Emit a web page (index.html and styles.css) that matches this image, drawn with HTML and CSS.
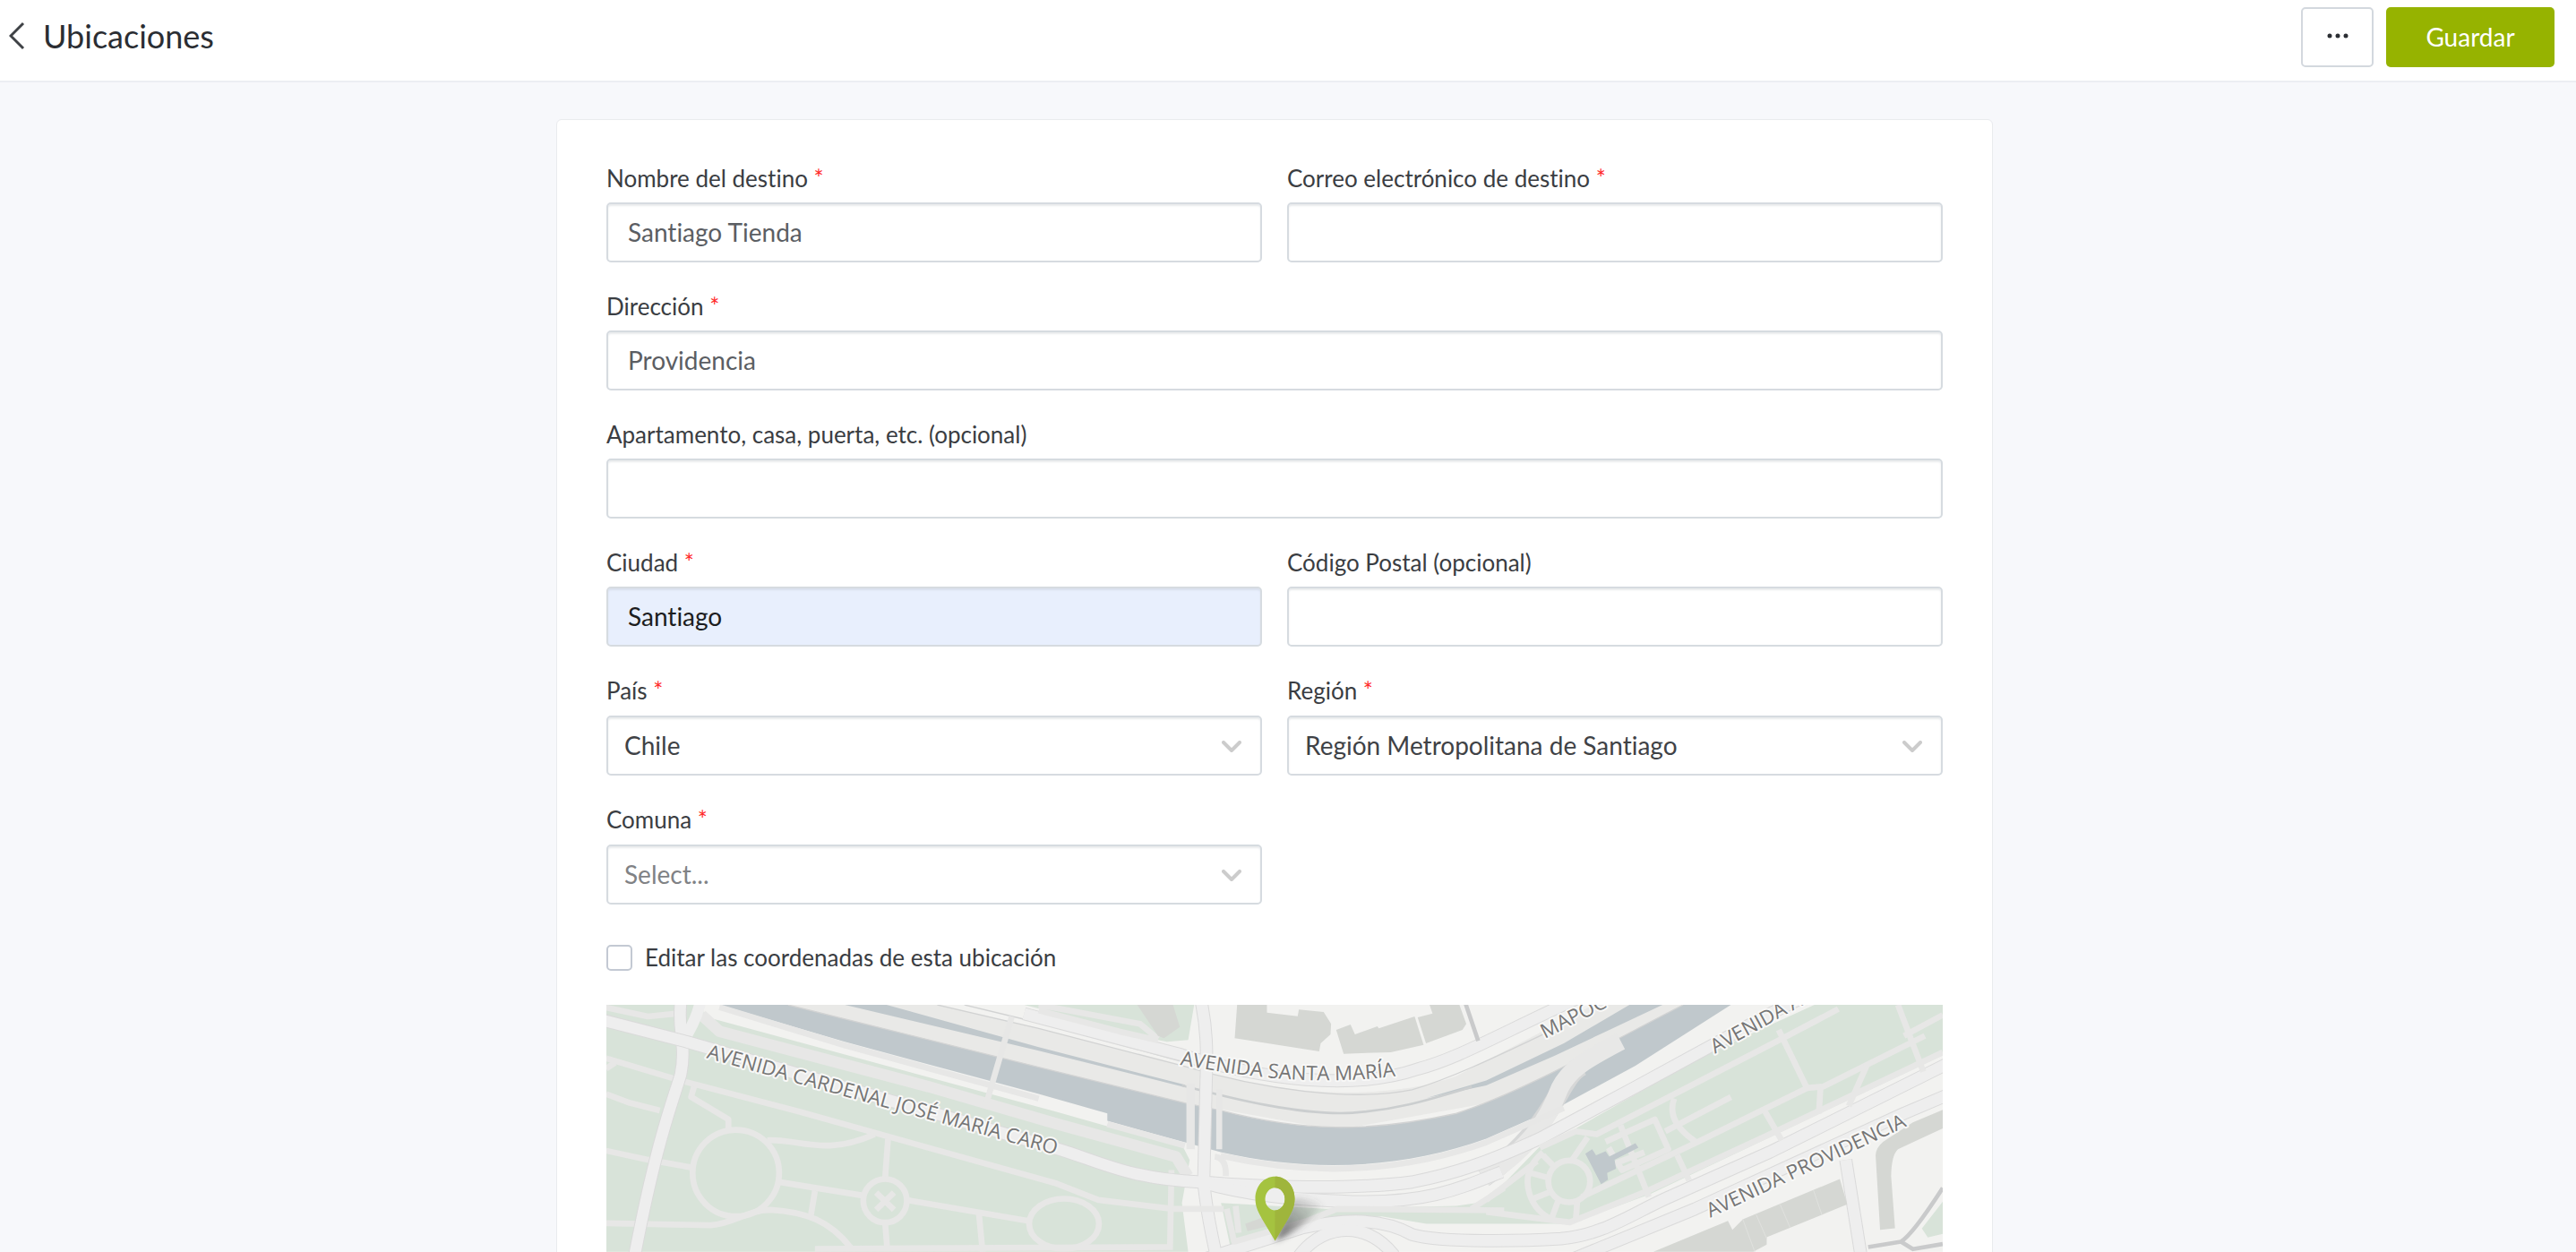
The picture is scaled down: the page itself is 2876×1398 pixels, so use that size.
FILE: index.html
```html
<!DOCTYPE html>
<html lang="es">
<head>
<meta charset="utf-8">
<meta name="viewport" content="width=device-width, initial-scale=1">
<title>Ubicaciones</title>
<link rel="stylesheet" href="styles.css">
</head>
<body>
<header class="topbar">
  <a class="back" href="#">
    <svg class="back-icon" viewBox="0 0 18 32" aria-hidden="true"><path d="M16 2 2 16l14 14"/></svg>
    <h1 class="title">Ubicaciones</h1>
  </a>
  <div class="actions">
    <button class="btn btn-more" type="button" aria-label="Más opciones">
      <svg class="dots" viewBox="0 0 24 6" aria-hidden="true"><circle cx="3" cy="3" r="2.5"/><circle cx="12" cy="3" r="2.5"/><circle cx="21" cy="3" r="2.5"/></svg>
    </button>
    <button class="btn btn-primary" type="submit" form="location">Guardar</button>
  </div>
</header>
<main class="content">
  <form class="card" id="location">
    <div class="fields">
      <div class="field">
        <label class="label" for="name">Nombre del destino <span class="req">*</span></label>
        <input class="control" id="name" type="text" value="Santiago Tienda">
      </div>
      <div class="field">
        <label class="label" for="email">Correo electrónico de destino <span class="req">*</span></label>
        <input class="control" id="email" type="email">
      </div>
      <div class="field wide">
        <label class="label" for="address">Dirección <span class="req">*</span></label>
        <input class="control" id="address" type="text" value="Providencia">
      </div>
      <div class="field wide">
        <label class="label" for="unit">Apartamento, casa, puerta, etc. (opcional)</label>
        <input class="control" id="unit" type="text">
      </div>
      <div class="field">
        <label class="label" for="city">Ciudad <span class="req">*</span></label>
        <input class="control filled" id="city" type="text" value="Santiago">
      </div>
      <div class="field">
        <label class="label" for="zip">Código Postal (opcional)</label>
        <input class="control" id="zip" type="text">
      </div>
      <div class="field field-select">
        <label class="label" for="country">País <span class="req">*</span></label>
        <div class="select">
          <select class="control" id="country"><option>Chile</option></select>
          <svg class="chevron" viewBox="0 0 22 14" aria-hidden="true"><path d="M2 2l9 9 9-9"/></svg>
        </div>
      </div>
      <div class="field field-select">
        <label class="label" for="region">Región <span class="req">*</span></label>
        <div class="select">
          <select class="control" id="region"><option>Región Metropolitana de Santiago</option></select>
          <svg class="chevron" viewBox="0 0 22 14" aria-hidden="true"><path d="M2 2l9 9 9-9"/></svg>
        </div>
      </div>
      <div class="field field-select">
        <label class="label" for="comuna">Comuna <span class="req">*</span></label>
        <div class="select">
          <select class="control empty" id="comuna"><option>Select...</option></select>
          <svg class="chevron" viewBox="0 0 22 14" aria-hidden="true"><path d="M2 2l9 9 9-9"/></svg>
        </div>
      </div>
    </div>
    <div class="check">
      <input class="checkbox" id="coords" type="checkbox">
      <label class="check-label" for="coords">Editar las coordenadas de esta ubicación</label>
    </div>
    <svg class="map" viewBox="0 0 4479 828" role="img" aria-label="Mapa de la ubicación">
      <defs>
        <filter id="soft" x="-50%" y="-50%" width="200%" height="200%"><feGaussianBlur stdDeviation="10"/></filter>
        <linearGradient id="shade" x1="0" y1="1" x2="1" y2="0"><stop offset="0" stop-color="#333" stop-opacity=".75"/><stop offset="1" stop-color="#555" stop-opacity="0"/></linearGradient>
        <path id="caro" d="M334 178 L1620 534"/>
        <path id="maria" d="M1922 201 C2100 232 2380 285 2720 228"/>
        <!-- main roads, drawn once as casing and once as fill -->
        <g id="roads">
          <path d="M-10 52 L270 124 L1509 482 C1640 520 1750 585 1990 594"/>
          <path d="M1994 594 C2200 612 2500 620 2700 594 C2850 565 2960 525 3129 448 L3449 276 L3900 30 L4000 -20"/>
          <path d="M1994 594 C2150 640 2300 652 2500 660 C2750 664 2850 620 3000 560"/>
          <path d="M1994 -10 C2012 80 2014 150 2010 264 L2002 594 C2010 680 2026 760 2044 840"/>
          <path d="M1400 30 L1929 168 C2200 250 2500 290 2720 215 C2850 180 2950 120 3250 -20"/>
          <path d="M1980 860 L2330 748 C2480 715 2600 715 2700 770 C2800 800 3100 790 3199 784 C3340 770 3420 710 3549 650 L3899 494 L4500 195"/>
          <path d="M3220 860 L3649 684 L4349 364 L4500 300"/>
          <path d="M2310 860 C2380 740 2540 710 2640 840"/>
          <path d="M4154 520 L4205 840"/>
        </g>
      </defs>

      <!-- ground, parks -->
      <rect class="ground" width="4479" height="828"/>
      <path class="park" d="M0 0H320L329 39 1509 359 1934 479 1955 520 1929 664 1950 828H0Z"/>
      <path class="park" d="M1400 0 1649 62 1799 108 1879 124 1950 118 1970 0Z"/>
      <path class="park" d="M2949 660 3129 474 3249 414 3689 164 4049 0H4479V169L3899 444 3499 634 3229 734H2929L2749 734 2599 709 2389 726 2090 805 2060 664 2410 684 2849 674Z"/>
      <path class="park" d="M4479 660 4409 750 4429 780 4479 768Z"/>

      <!-- river and motorway -->
      <path class="motorway" d="M609 0H1109L1449 79 1929 204 2039 234 C2250 292 2600 330 2849 239 L3309 0H3609L3469 84 3319 154 3199 214 2949 330 2449 420 1939 329 1449 211Z"/>
      <path class="water" d="M609 0 1449 209 1939 329 2059 354 C2330 425 2550 430 2849 364 C3050 300 3300 160 3609 0H3769L3449 204 3209 334 2949 449 C2650 555 2350 560 2059 494L1679 389V364L1449 299 799 124 379 0Z"/>
      <path class="water" d="M799 0H939L1449 142 1939 268V276L1449 154Z"/>
      <path class="water" d="M2749 312 2949 254 3209 129 3429 0H3540L3349 90 3179 170 2949 270Z"/>
      <path class="edge" d="M609 0 1449 209 1939 329 2059 354 C2330 425 2550 430 2849 364 C3050 300 3300 160 3609 0"/>
      <path class="edge thick" d="M1929 270 C2100 315 2330 372 2500 362 C2650 352 2750 320 2900 275"/>
      <path class="edge" d="M1109 0 1449 79 1929 204 C2200 285 2500 325 2700 285 C2820 250 2950 190 3200 70"/>
      <path class="edge" d="M1200 0 1449 60 1929 190"/>
      <path class="ramp-case" d="M3270 205 C3190 240 3190 400 2940 580"/>
      <path class="ramp" d="M3400 122 C3270 190 3225 220 3195 280 C3160 370 3110 470 2940 580"/>
      <path class="walk" d="M379 8 799 136 1449 314M1679 400 1939 472M2059 506 C2350 572 2650 567 2949 461L3209 346"/>

      <!-- western park -->
      <g transform="translate(-51 -306)">
        <path class="walk wide" d="M370 340 430 395 1130 580 1560 705 1960 815 2000 880"/>
        <path class="walk" d="M50 315 190 345 290 335M50 485 300 560 700 665 1560 905 1700 960 1950 990"/>
        <path class="walk" d="M50 520 80 500M50 605 130 635 230 660M50 795 190 825 340 852M345 580 335 615 460 690V720"/>
        <path class="walk" d="M590 760 C700 755 780 815 950 740M995 755 985 890M630 900 910 945M1055 960 1465 1030M750 930 735 1020M985 1035 992 1120M1300 1010 1312 1134"/>
        <path class="walk" d="M50 1038 400 1045 C480 1040 520 995 600 993 C720 1000 800 1030 870 1120"/>
        <circle class="walk" cx="485" cy="870" r="145"/><circle class="walk" cx="985" cy="963" r="73"/>
        <path class="walk" d="M955 935 1015 993M1015 935 955 993"/>
        <ellipse class="walk" cx="1585" cy="1040" rx="117" ry="84"/>
        <path class="walk" d="M750 1124 1950 1118M1945 860 1940 1120"/>
        <path class="walk" d="M1410 345 1325 635"/>
        <path class="road-case" d="M300 300 C290 400 320 440 300 540 C270 640 220 760 145 1150"/>
        <path class="road" d="M300 300 C290 400 320 440 300 540 C270 640 220 760 145 1150M365 300 C350 370 320 400 305 440"/>
      </g>

      <use href="#roads" class="road-case"/>
      <use href="#roads" class="road"/>

      <!-- bridges, buildings and the paths by the pin -->
      <g transform="translate(1449 -66)">
        <path class="walk bridge" d="M509 330V550"/>
        <path class="walk" d="M605 350V550M590 575Q630 580 627 640M620 750H450M630 750 655 860 900 790 1000 750 1560 755M660 740 670 830M1450 750 1560 680"/>
        <path class="walk" d="M0 85 270 155 400 185M0 66 340 130 400 180"/>
        <path class="building" d="M665 66H765V92L868 104 872 82 955 90 980 130 978 165 945 195 940 222 657 178Z"/>
        <path class="building" d="M997 150 1045 132 1060 165 1135 138 1140 145 1260 105 1290 200 1180 225 1022 230Z"/>
        <path class="building" d="M1270 108 1320 95 1310 66H1410L1433 130 1420 150 1298 195Z"/>
        <path class="building" d="M330 66H450L473 140 420 178 400 170ZM692 800 790 765 800 800 700 825Z"/>
        <path class="lane" d="M1430 60 1473 187"/>
      </g>

      <!-- eastern park -->
      <g transform="translate(2949 -66)">
        <path class="walk" d="M0 720 170 590M180 545 300 490 370 500 1000 175 1180 80M980 150 1075 345 1130 340 1470 170M1380 66 1465 290M1400 170 1530 100"/>
        <path class="walk" d="M320 710 700 530 1075 345M1120 345 1115 430M1275 270 1215 405M935 425 990 520M630 380 Q600 460 710 530M600 490 820 375M640 570 680 655M450 470 545 710"/>
        <path class="walk" d="M400 525 565 450 610 550 455 620 440 595 530 560M410 545 425 570M0 760 280 795 540 690 950 500 1530 225M340 510 285 590"/>
        <circle class="walk" cx="278" cy="658" r="70"/>
        <path class="walk" d="M190 560 Q120 620 145 700 Q165 760 220 785M190 570 225 605M150 630 205 645M160 715 210 695M220 780 240 725M300 790 305 725"/>
        <path class="monument" d="M332 565 355 550 368 570 400 557 412 575 500 530 510 545 430 585 435 615 405 630 408 652 385 667Z"/>
        <path class="building" d="M560 894 810 790 825 820 860 785 1185 650 1210 735 940 845V870L895 894Z"/>
        <path class="building" d="M1320 820 1305 570 Q1306 545 1330 525L1430 460 1530 418V480L1380 550Q1358 570 1357 640L1370 815Z"/>
        <path class="seam" d="M860 785 900 894M905 770 940 850M985 735 1018 812M1097 688 1125 770"/>
        <path class="lane" d="M1280 878 1390 860 Q1430 835 1530 680M1390 860 1430 885 1530 868"/>
      </g>

      <!-- street names -->
      <g class="street">
        <text><textPath href="#caro">AVENIDA CARDENAL JOSÉ MARÍA CARO</textPath></text>
        <text><textPath href="#maria">AVENIDA SANTA MARÍA</textPath></text>
        <text transform="translate(3145 114) rotate(-27)">MAPOC</text>
        <text transform="translate(3716 164) rotate(-29)">AVENIDA A</text>
        <text transform="translate(3700 714) rotate(-25)">AVENIDA PROVIDENCIA</text>
      </g>

      <!-- pin -->
      <path d="M2241 791 C2300 770 2360 720 2400 670 Q2350 640 2300 650Z" fill="url(#shade)" filter="url(#soft)"/>
      <path fill="#a5c340" fill-rule="evenodd" d="M2241 576C2203 576 2175 608 2175 650C2175 680 2188 700 2200 722L2241 791L2282 722C2294 700 2307 680 2307 650C2307 608 2279 576 2241 576ZM2241 613A33 38 0 1 1 2241 689A33 38 0 1 1 2241 613Z"/>
      <path fill="#9fb53c" d="M2241 576C2279 576 2307 608 2307 650C2307 680 2294 700 2282 722L2241 791V689A33 38 0 0 0 2241 613Z"/>
    </svg>
  </form>
</main>
</body>
</html>
```
FILE: styles.css
```css
* {
  box-sizing: border-box;
}

body {
  margin: 0;
  height: 100vh;
  overflow: hidden;
  background: #f7f8fb;
  color: #3a3d42;
  font-family: Lato, "Liberation Sans", sans-serif;
  font-size: 26px;
  font-variant-ligatures: none;
}

.topbar {
  display: flex;
  align-items: flex-start;
  justify-content: space-between;
  height: 92px;
  padding: 8px 24px 0 10px;
  background: #fff;
  border-bottom: 2px solid #eceef2;
}

.back {
  display: flex;
  align-items: center;
  gap: 20px;
  height: 64px;
  color: #2b2e33;
  text-decoration: none;
}

.back-icon {
  width: 18px;
  height: 32px;
  fill: none;
  stroke: #3f4246;
  stroke-width: 3;
}

.title {
  margin: 0;
  font-size: 36px;
  font-weight: 400;
}

.actions {
  display: flex;
  gap: 14px;
}

.btn {
  height: 67px;
  border-radius: 5px;
  font: inherit;
  font-size: 28px;
}

.btn-more {
  display: flex;
  align-items: center;
  justify-content: center;
  width: 81px;
  padding: 0 0 4px;
  background: #fff;
  border: 2px solid #d3d8de;
}

.dots {
  width: 24px;
  height: 6px;
  fill: #2b2e33;
}

.btn-primary {
  width: 188px;
  padding: 0 0 2px;
  background: #96b300;
  border: 0;
  color: #fff;
  font-variant-ligatures: none;
}

.content {
  padding: 41px 30px 0 0;
}

.card {
  max-width: 1604px;
  margin: 0 auto;
  padding: 49px 55px 56px;
  background: #fff;
  border: 1px solid #e9ebee;
  border-radius: 6px;
}

.fields {
  display: grid;
  grid-template-columns: 1fr 1fr;
  gap: 33px 28px;
}

.field {
  display: flex;
  flex-direction: column;
  gap: 11px;
}

.field-select {
  gap: 12px;
}

.wide {
  grid-column: 1 / -1;
}

.label {
  line-height: 32px;
}

.req {
  color: #ff2a2a;
}

.control {
  width: 100%;
  height: 67px;
  padding: 0 22px 2px;
  background: #fff;
  border: 2px solid #d6dbe0;
  border-radius: 5px;
  box-shadow: inset 0 2px 2px #e9ebed;
  color: #5b5e63;
  font: inherit;
  font-size: 28px;
  font-variant-ligatures: none;
}

.filled {
  background: #e8effd;
  box-shadow: inset 0 2px 2px #d8dfec;
  color: #1c1d20;
}

.select {
  position: relative;
}

select.control {
  appearance: none;
  padding: 0 18px 2px;
  color: #3f4246;
}

select.empty {
  color: #808285;
}

.chevron {
  position: absolute;
  top: 28px;
  right: 23px;
  width: 22px;
  height: 14px;
  fill: none;
  stroke: #ccc;
  stroke-width: 4;
  stroke-linecap: round;
  stroke-linejoin: round;
  pointer-events: none;
}

.check {
  display: flex;
  align-items: center;
  gap: 14px;
  margin: 43px 0 37px;
}

.checkbox {
  appearance: none;
  width: 29px;
  height: 29px;
  margin: 0;
  background: #fff;
  border: 2px solid #c3c9d3;
  border-radius: 5px;
}

.check-label {
  line-height: 32px;
}

.map {
  display: block;
  width: 100%;
}

.ground { fill: #f2f2f0; }
.park { fill: #d8e3d9; }
.water { fill: #c0c8cc; }
.motorway { fill: #e9e9e7; }
.building { fill: #d5d7d3; }
.monument { fill: #c0c8cc; }

.edge,
.walk,
.lane,
.seam,
.ramp,
.ramp-case,
.road,
.road-case {
  fill: none;
  stroke-linejoin: round;
}

.edge { stroke: #d2d3d3; stroke-width: 4; }
.thick { stroke: #cbcecf; stroke-width: 8; }
.walk { stroke: #e7e7e6; stroke-width: 20; }
.walk.wide { stroke-width: 38; }
.walk.bridge { stroke-width: 28; }
.lane { stroke: #c9cacb; stroke-width: 14; }
.seam { stroke: #e0e1de; stroke-width: 3; }
.ramp-case { stroke: #d6d7d7; stroke-width: 66; }
.ramp { stroke: #e8e8e7; stroke-width: 60; }
.road-case { stroke: #dadada; stroke-width: 44; }
.road { stroke: #eee; stroke-width: 38; }

.street {
  fill: #757575;
  stroke: #f8f8f7;
  stroke-width: 12px;
  stroke-linejoin: round;
  paint-order: stroke;
  font-family: "Open Sans", "Noto Sans", sans-serif;
  font-size: 67px;
}
```
